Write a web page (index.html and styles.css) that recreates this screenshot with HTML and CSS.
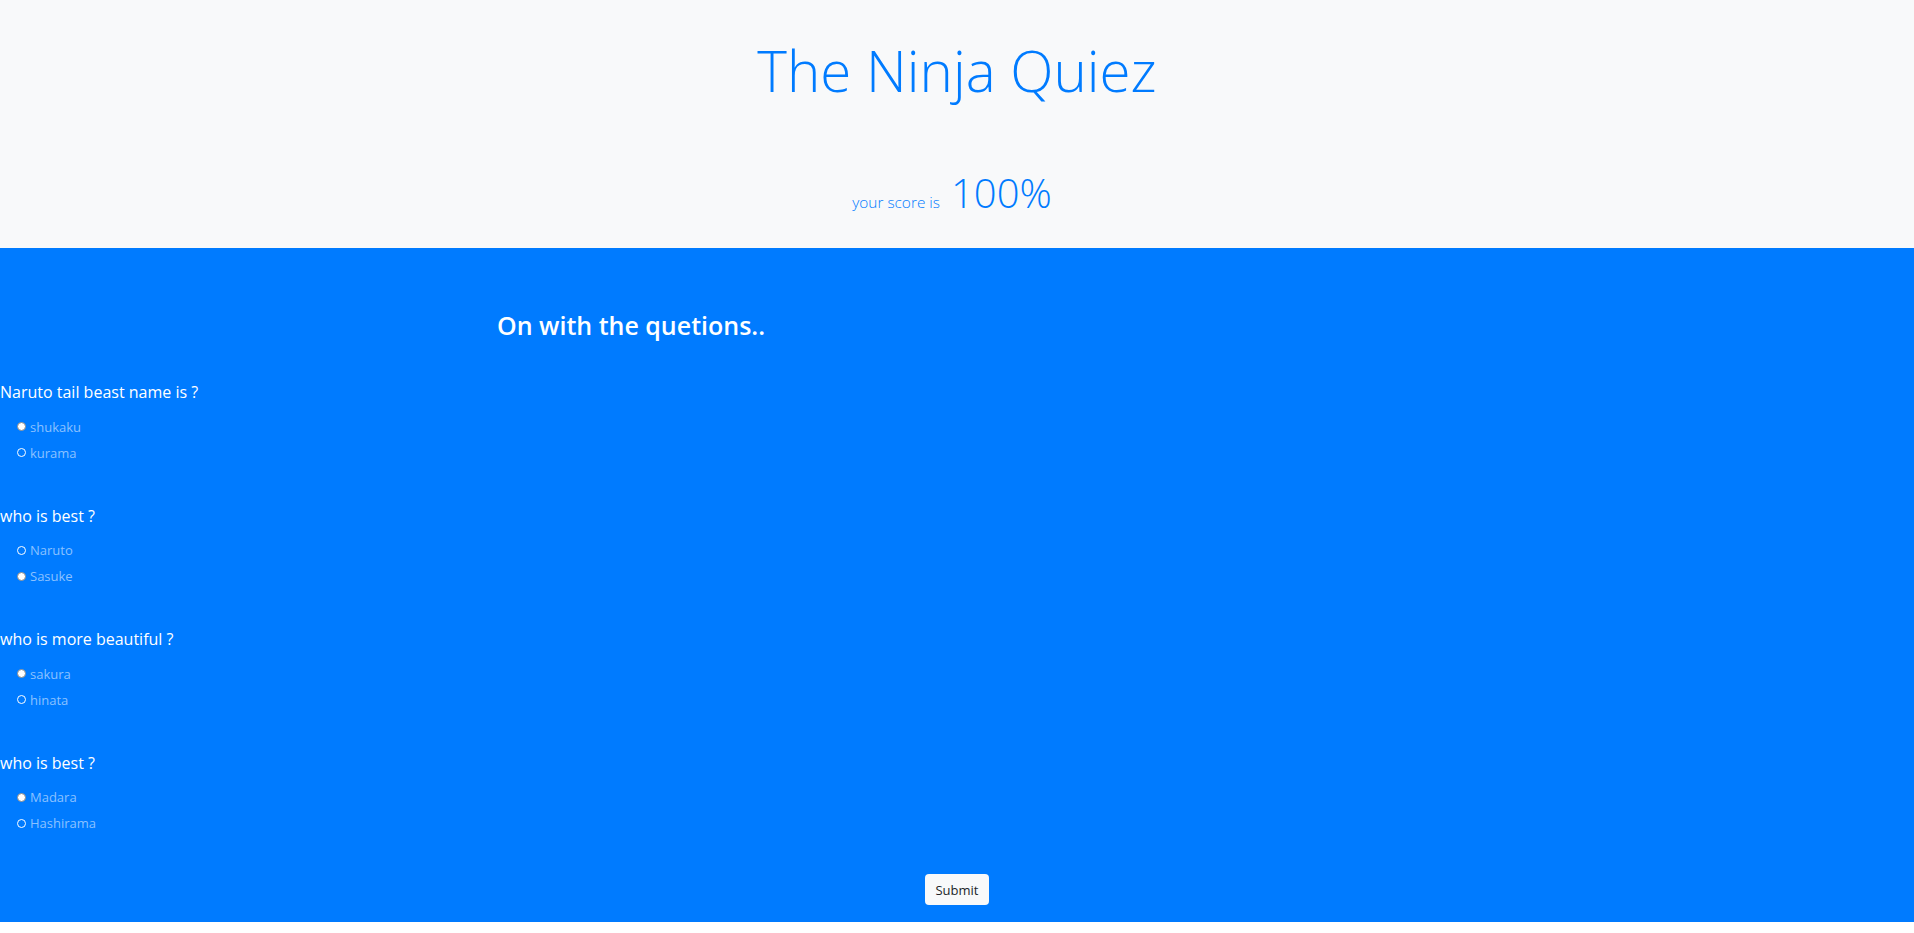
FILE: index.html
```html
<!DOCTYPE html>
<html lang="en">
<head>
<meta charset="utf-8">
<title>The Ninja Quiez</title>
<link rel="stylesheet" href="styles.css">
</head>
<body>
<header class="hero">
  <h1 class="hero-title">The Ninja Quiez</h1>
  <p class="score"><span class="score-label">your score is</span><span class="score-value">100%</span></p>
</header>
<main class="quiz">
  <h2 class="quiz-title">On with the quetions..</h2>
  <form class="quiz-form">
    <div class="question">
      <p class="q-text">Naruto tail beast name is ?</p>
      <label class="option"><span class="radio checked"></span>shukaku</label>
      <label class="option"><span class="radio"></span>kurama</label>
    </div>
    <div class="question">
      <p class="q-text">who is best ?</p>
      <label class="option"><span class="radio"></span>Naruto</label>
      <label class="option"><span class="radio checked"></span>Sasuke</label>
    </div>
    <div class="question">
      <p class="q-text">who is more beautiful ?</p>
      <label class="option"><span class="radio checked"></span>sakura</label>
      <label class="option"><span class="radio"></span>hinata</label>
    </div>
    <div class="question">
      <p class="q-text">who is best ?</p>
      <label class="option"><span class="radio checked"></span>Madara</label>
      <label class="option"><span class="radio"></span>Hashirama</label>
    </div>
    <div class="actions">
      <button type="button" class="submit">Submit</button>
    </div>
  </form>
</main>
</body>
</html>
```

FILE: styles.css
```css
* { box-sizing: border-box; }
html, body { margin: 0; padding: 0; }
body {
  background: #ffffff;
  font-family: "Open Sans", "Noto Sans", "Liberation Sans", sans-serif;
  color: #212529;
}
.hero {
  background: #f8f9fa;
  height: 248px;
  display: flex;
  flex-direction: column;
  align-items: center;
  padding-top: 37px;
}
.hero-title {
  margin: 0;
  font-size: 56.5px;
  font-weight: 300;
  line-height: 1.2;
  color: #007bff;
}
.score {
  margin: 64px 10px 0 0;
  display: flex;
  align-items: baseline;
  gap: 11px;
  color: #007bff;
}
.score-label {
  font-size: 15.4px;
  font-weight: 300;
}
.score-value {
  font-size: 40px;
  font-weight: 300;
  line-height: 1.2;
}
.quiz {
  background: #007bff;
  padding: 62px 0 17px;
}
.quiz-title {
  width: 1262px;
  margin: 0 0 40px;
  text-align: center;
  font-size: 25px;
  font-weight: 600;
  line-height: 1.2;
  color: #ffffff;
}
.question {
  margin-bottom: 38px;
}
.q-text {
  margin: 0 0 8px;
  font-size: 16px;
  line-height: 25.5px;
  color: #ffffff;
}
.option {
  display: flex;
  align-items: center;
  gap: 4px;
  padding-left: 17px;
  height: 26px;
  font-size: 13px;
  color: #8cc2ff;
}
.radio {
  width: 9px;
  height: 9px;
  border-radius: 50%;
  border: 1.5px solid #ffffff;
  background: transparent;
}
.radio.checked {
  background: #ffffff;
  border-color: #8a8a8a;
  border-width: 1px;
}
.actions {
  display: flex;
  justify-content: center;
}
.submit {
  width: 64px;
  height: 31px;
  border: none;
  border-radius: 4px;
  background: #f8f9fa;
  color: #212529;
  font-family: inherit;
  font-size: 13px;
  cursor: pointer;
}
```
